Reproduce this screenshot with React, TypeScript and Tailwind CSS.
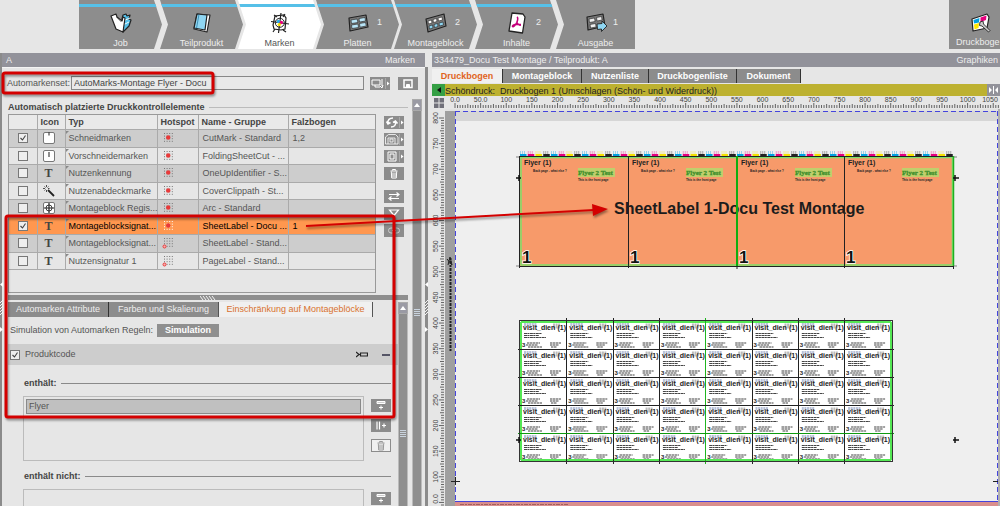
import { useState, type ReactNode } from 'react';
import clsx from 'clsx';

interface Step {
  label: string;
  icon: ReactNode;
  count?: number;
  bar?: boolean;
  className: string;
}

interface MarkRow {
  icon: 'cut' | 'precut' | 'text' | 'wand' | 'register';
  type: string;
  hotspot: 'center' | 'corner';
  name: string;
  sheet: string;
}

const ROWS: MarkRow[] = [
  { icon: 'cut', type: 'Schneidmarken', hotspot: 'center', name: 'CutMark - Standard', sheet: '1,2' },
  { icon: 'precut', type: 'Vorschneidemarken', hotspot: 'center', name: 'FoldingSheetCut - ...', sheet: '' },
  { icon: 'text', type: 'Nutzenkennung', hotspot: 'center', name: 'OneUpIdentifier - S...', sheet: '' },
  { icon: 'wand', type: 'Nutzenabdeckmarke', hotspot: 'center', name: 'CoverClippath - St...', sheet: '' },
  { icon: 'register', type: 'Montageblock Regis...', hotspot: 'center', name: 'Arc - Standard', sheet: '' },
  { icon: 'text', type: 'Montageblocksignat...', hotspot: 'center', name: 'SheetLabel - Docu ...', sheet: '1' },
  { icon: 'text', type: 'Montageblocksignat...', hotspot: 'corner', name: 'SheetLabel - Stand...', sheet: '' },
  { icon: 'text', type: 'Nutzensignatur 1', hotspot: 'corner', name: 'PageLabel - Stand...', sheet: '' },
];

const SELECTED_ROW = 5;

const CLIP_FIRST = '[clip-path:polygon(0_0,calc(100%-8px)_0,100%_50%,calc(100%-8px)_100%,0_100%)]';
const CLIP_MIDDLE = '[clip-path:polygon(0_0,calc(100%-8px)_0,100%_50%,calc(100%-8px)_100%,0_100%,8px_50%)]';
const CLIP_LAST = '[clip-path:polygon(0_0,100%_0,100%_100%,0_100%,8px_50%)]';

/* ---------- Icons: workflow bar ---------- */

function JobIcon() {
  return (
    <svg width="22" height="22" viewBox="0 0 22 22" strokeLinejoin="round" stroke="#222" strokeWidth="1.2">
      <path d="M12 7l1-4 3-1 1 2 3-1-1 4 2 1-2 6-6 6z" fill="#56c0e8" />
      <path d="M13 9l7-3M13 13l6-3" stroke="#fff" strokeWidth=".9" />
      <path d="M1 4l5-2 1 3 5 4 1-4 2 1-2 14-7-3z" fill="#fff" />
      <path d="M6 5l5 5" fill="none" stroke="#888" strokeWidth=".7" />
    </svg>
  );
}

function BookIcon() {
  return (
    <svg width="22" height="22" viewBox="0 0 22 22" strokeLinejoin="round" stroke="#222" strokeWidth="1.2">
      <path d="M6 2l13 1-3 17-13-3z" fill="#fff" />
      <path d="M6 2l10 1-2 15-11-2z" fill="#8fd6f2" />
      <path d="M8 2.300l-2.500 14" stroke="#2c7ea6" strokeWidth=".8" />
    </svg>
  );
}

function MarkIcon() {
  return (
    <svg width="20" height="22" viewBox="0 0 20 22" fill="none" stroke="#222">
      <path d="M5 4l9-1 2 3-1 11-4 1-7-1-1-4z" fill="#fff" strokeWidth="1.200" />
      <path d="M11 1L8.500 21M1 9.500l18 2.500" strokeWidth="1.200" />
      <path d="M4 3l3 2M13 18l3 2M15 2l-2 3M5 17l-2 3" strokeWidth="1.200" />
      <circle cx="9.800" cy="10.800" r="4.500" />
      <circle cx="8.500" cy="9.500" r="1.800" fill="#29abe2" stroke="none" />
      <circle cx="11.300" cy="10.500" r="1.800" fill="#e6007e" stroke="none" />
      <circle cx="9.300" cy="12.600" r="1.700" fill="#f5e000" stroke="none" />
    </svg>
  );
}

function PlateIcon() {
  return (
    <svg width="22" height="18" viewBox="0 0 22 18" strokeLinejoin="round" stroke="#222">
      <path d="M2 4l17-3 2 12-18 4z" fill="#777" strokeWidth="1.200" />
      <path d="M4 6l6-1 1 3.500-6.500 1zM12 4.500l6-1 .5 3.500-6 1zM4.500 11l6.500-1 .5 3.500-6.500 1zM12.500 9.500l6-1 .8 3.500-6.300 1.200z" fill="#b9e5f7" strokeWidth=".6" />
    </svg>
  );
}

function BlockIcon() {
  return (
    <svg width="22" height="20" viewBox="0 0 22 20" strokeLinejoin="round" stroke="#222" strokeWidth=".6">
      <path d="M1 6l18-5 2 12-18 6z" fill="#777" strokeWidth="1.200" />
      <path d="M3 8l3.500-1 .5 3-3.500 1zM8 6.500l3.500-1 .5 3-3.500 1zM13 5l4-1 .5 3-4 1z" fill="#fff" />
      <path d="M4 13l3.500-1 .5 3-3.500 1zM9 11.500l3.500-1 .5 3-3.500 1zM14 10l4-1 .5 3-4 1z" fill="#8fd6f2" />
    </svg>
  );
}

function PdfIcon() {
  return (
    <svg width="20" height="22" viewBox="0 0 20 22" fill="none" strokeLinejoin="round">
      <path d="M5 1l11 1 2 3-2.500 16L2 19z" fill="#fff" stroke="#222" strokeWidth="1.300" />
      <path d="M10 5c1.500 1 .8 3-.2 5.500C8.500 13.500 6 15.500 5.500 14.500c-.5-1.500 4-2.800 8.500-2M9.800 10.500c1 1.800 2.500 3 4 2.500" stroke="#c4007a" strokeWidth="1.600" />
    </svg>
  );
}

function OutputIcon() {
  return (
    <svg width="22" height="20" viewBox="0 0 22 20" strokeLinejoin="round" stroke="#222">
      <path d="M2 4l16-3 2 12-17 4z" fill="#777" strokeWidth="1.200" />
      <path d="M4 6l5.500-1 .6 3.500L4.500 9.500zM11.500 4.500l5-1 .6 3.500-5 1zM5 11.500l5.500-1 .6 3.500-5.500 1z" fill="#eee" strokeWidth=".6" />
      <path d="M12 11l5-.5V8l5 5-5.500 5.500V16l-4 .5z" fill="#8fd6f2" strokeWidth=".9" />
    </svg>
  );
}

function SheetToolIcon() {
  return (
    <svg width="22" height="20" viewBox="0 0 22 20" strokeLinejoin="round">
      <path d="M2 6l15-5 2 3-2 11-14 3z" fill="#fff" stroke="#222" strokeWidth="1.200" />
      <path d="M3.500 7l6-2-.5 4.500-5 1z" fill="#00a0e0" />
      <path d="M10.500 4.500l6-2-.5 4.500-5.500 2z" fill="#e6007e" />
      <path d="M4 11.500l5-1.500-.5 5-4 1.500z" fill="#ffe600" />
      <path d="M10 9l3-1 .5 3 6.500 6.500-1.500 1.500-6.500-6-2.500-.5z" fill="#ccc" stroke="#222" strokeWidth=".9" />
    </svg>
  );
}

/* ---------- Icons: panels ---------- */

function RowIcon({ kind }: { kind: MarkRow['icon'] }) {
  if (kind === 'text') {
    return <span className="font-['Liberation_Serif',serif] text-[12px] leading-none font-bold text-[#444]">T</span>;
  }
  if (kind === 'wand') {
    return (
      <svg width="12" height="12" viewBox="0 0 12 12" stroke="#222" fill="none">
        <path d="M5 5l6 6" strokeWidth="1.800" />
        <path d="M3.500 0v2M3.500 5v2M0 3.500h2M5 3.500h1.500M1.500 1.500l1 1M5.500 1.500l-1 1M1.500 5.500l1-1" strokeWidth=".8" />
      </svg>
    );
  }
  return (
    <svg width="12" height="12" viewBox="0 0 12 12" fill="none" stroke="#444">
      <rect x=".5" y=".5" width="11" height="11" rx="1.500" fill="#fff" stroke="#777" />
      {kind === 'cut' && <path d="M6 0v3.500" strokeWidth="1.200" />}
      {kind === 'precut' && <path d="M6 2v5" strokeWidth="1.200" />}
      {kind === 'register' && (
        <>
          <circle cx="6" cy="6" r="3" />
          <path d="M6 1v10M1 6h10" stroke="#222" strokeWidth="1.200" />
        </>
      )}
    </svg>
  );
}

function Hotspot({ kind, selected }: { kind: MarkRow['hotspot']; selected: boolean }) {
  const dots = [0, 1, 2, 3].flatMap((x) => [0, 1, 2, 3].map((y) => [x, y]));
  return (
    <svg width="12" height="12" viewBox="0 0 12 12">
      {dots.map(([x, y]) => (
        <rect key={`${x}-${y}`} x={2 + x * 2.6} y={1 + y * 2.6} width="1" height="1" fill={selected ? '#fff' : '#777'} />
      ))}
      {kind === 'center' ? (
        <circle cx="6.200" cy="5.500" r="2.200" fill="#e83a3a" />
      ) : (
        <circle cx="2.500" cy="9.500" r="1.500" fill="#f9b0b0" stroke="#e83a3a" />
      )}
    </svg>
  );
}

function ToolButton({ label, arrow, outlined, children }: { label: string; arrow?: boolean; outlined?: boolean; children: ReactNode }) {
  return (
    <button
      aria-label={label}
      className={clsx(
        'flex h-[13px] w-5 shrink-0 items-center justify-center',
        outlined ? 'border border-[#8c8c8c] bg-[#f0f0f0] text-[#999]' : 'bg-[#8c8c8c] text-white',
      )}
    >
      <svg width="20" height="13" viewBox="0 0 20 13" fill="none" stroke="currentColor" className="shrink-0">
        {arrow && <path d="M17 4.500l2.500 2-2.500 2z" fill="currentColor" stroke="none" />}
        {arrow && <path d="M15.500 1v11" stroke="#b5b5b5" strokeWidth=".7" />}
        {children}
      </svg>
    </button>
  );
}

function Trash() {
  return <path d="M6.500 4h7M8.500 3.500v-1h3v1M7.300 4.500l.4 6.500h4.600l.4-6.500M9 5.500v4.500M11 5.500v4.500" />;
}

function AddRow() {
  return <path d="M6 2.500h8v2H6zM10 6.500v4M8 8.500h4" fill="#ccc" />;
}

function ScrollTrack({ thumb }: { thumb: string }) {
  return (
    <div className="flex w-[10px] shrink-0 flex-col items-center border-x border-[#bbb] bg-[#8e8e8e]">
      <button aria-label="Nach oben" className="flex h-3 w-[10px] shrink-0 items-center justify-center border border-[#aaa] bg-[#9a9aa4]">
        <svg width="6" height="4" viewBox="0 0 6 4">
          <path d="M3 0l3 4H0z" fill="#fff" />
        </svg>
      </button>
      <svg width="6" height="8" viewBox="0 0 6 8" className={clsx('shrink-0', thumb)}>
        <path d="M0 .5h6M0 2.500h6M0 4.500h6M0 6.500h6" stroke="#c9d3de" />
      </svg>
    </div>
  );
}

function Divider({ className }: { className?: string }) {
  return (
    <svg width="3" height="50" viewBox="0 0 3 50" className={className}>
      <path d="M3 0v5L0 2.500z" fill="#fff" />
      <path d="M0 21l3-3M0 24l3-3M0 27l3-3M0 30l3-3M0 33l3-3" stroke="#fff" strokeWidth=".9" />
      <path d="M0 45l3 2.500L0 50z" fill="#fff" />
    </svg>
  );
}

/* ---------- Workflow bar ---------- */

const STEPS: Step[] = [
  { label: 'Job', icon: <JobIcon />, bar: true, className: clsx('w-[83px]', CLIP_FIRST) },
  { label: 'Teilprodukt', icon: <BookIcon />, bar: true, className: clsx('-ml-[2px] w-[83px]', CLIP_MIDDLE) },
  { label: 'Marken', icon: <MarkIcon />, bar: true, className: clsx('-ml-[5px] w-[83px]', CLIP_MIDDLE) },
  { label: 'Platten', icon: <PlateIcon />, count: 1, bar: true, className: clsx('-ml-[5px] w-[83px]', CLIP_MIDDLE) },
  { label: 'Montageblock', icon: <BlockIcon />, count: 2, bar: true, className: clsx('-ml-[5px] w-[83px]', CLIP_MIDDLE) },
  { label: 'Inhalte', icon: <PdfIcon />, count: 2, bar: true, className: clsx('-ml-[2px] w-[83px]', CLIP_MIDDLE) },
  { label: 'Ausgabe', icon: <OutputIcon />, count: 1, className: clsx('-ml-[2px] w-[79px]', CLIP_LAST) },
];

function WorkflowBar() {
  return (
    <header className="flex h-[49px] shrink-0 pl-[79px]">
      <nav className="flex">
        {STEPS.map((step) => (
          <button
            key={step.label}
            className={clsx(
              'relative flex shrink-0 flex-col items-center pt-[11px]',
              step.label === 'Marken' ? 'bg-white text-[#555]' : 'bg-[#8d8d8d] text-[#eee]',
              step.className,
            )}
          >
            {step.bar && <span className="absolute inset-x-0 top-1 h-[3px] bg-[#56c0e8]" />}
            <span className="flex h-[24px] items-center">{step.icon}</span>
            <span className="mt-[2px] leading-[12px]">{step.label}</span>
            {step.count && <span className="absolute top-[16px] right-[17px] leading-[12px]">{step.count}</span>}
          </button>
        ))}
      </nav>
      <button className="ml-auto flex w-[51px] shrink-0 flex-col items-start bg-[#8d8d8d] pt-[11px] pl-[7px] text-[#eee]">
        <span className="flex h-[24px] items-center pl-[14px]">
          <SheetToolIcon />
        </span>
        <span className="mt-px leading-[12px] whitespace-nowrap">Druckboge</span>
      </button>
    </header>
  );
}

/* ---------- Left side: marks ---------- */

function Check({ label, checked, onChange }: { label: string; checked: boolean; onChange: () => void }) {
  return (
    <span className="relative block size-[10px]">
      <input
        type="checkbox"
        aria-label={label}
        checked={checked}
        onChange={onChange}
        className="block size-[10px] appearance-none border border-[#777] bg-[#eee]"
      />
      {checked && (
        <svg width="10" height="10" viewBox="0 0 10 10" className="pointer-events-none absolute inset-0">
          <path d="M2.500 5l2 2 3-4.500" fill="none" stroke="#444" strokeWidth="1.100" />
        </svg>
      )}
    </span>
  );
}

function MarksTable() {
  const [checked, setChecked] = useState<number[]>([0, 5]);

  const toggle = (i: number) => {
    setChecked((prev) => (prev.includes(i) ? prev.filter((n) => n !== i) : [...prev, i]));
  };

  return (
    <div className="h-[179px] min-w-0 flex-1 border border-[#999]">
      <table className="w-full table-fixed border-collapse text-left text-[#555]">
        <colgroup>
          <col className="w-[28px]" />
          <col className="w-[28px]" />
          <col />
          <col className="w-[41px]" />
          <col className="w-[90px]" />
          <col className="w-[87px]" />
        </colgroup>
        <thead>
          <tr className="h-[14px] bg-[#e9e9e9] leading-[12px] text-[#444] [&>th]:border-r [&>th]:border-b [&>th]:border-[#aaa] [&>th]:p-0 [&>th]:pl-[3px] [&>th:last-child]:border-r-0">
            <th />
            <th>Icon</th>
            <th>Typ</th>
            <th>Hotspot</th>
            <th>Name - Gruppe</th>
            <th>Falzbogen</th>
          </tr>
        </thead>
        <tbody>
          {ROWS.map((row, i) => {
            const selected = i === SELECTED_ROW;
            return (
              <tr
                key={i}
                className={clsx(
                  'leading-[12px] odd:h-[18px] even:h-[17px] [&>td]:border-r [&>td]:border-b [&>td]:border-[#aaa] [&>td]:p-0 [&>td]:whitespace-nowrap [&>td:last-child]:border-r-0',
                  selected ? 'bg-[#ff974f] text-black' : 'odd:bg-[#cdcdcd] even:bg-[#e6e6e6]',
                )}
              >
                <td>
                  <div className="flex justify-center">
                    <Check label={row.type} checked={checked.includes(i)} onChange={() => toggle(i)} />
                  </div>
                </td>
                <td>
                  <div className="flex h-3 items-center pl-[5px]">
                    <span className="flex w-3 justify-center">
                      <RowIcon kind={row.icon} />
                    </span>
                  </div>
                </td>
                <td>
                  <div className="relative pl-[3px]">
                    <svg width="3" height="3" className="absolute -top-px left-0">
                      <path d="M0 0h3L0 3z" fill="#888" />
                    </svg>
                    {row.type}
                  </div>
                </td>
                <td>
                  <div className="pl-1">
                    <Hotspot kind={row.hotspot} selected={selected} />
                  </div>
                </td>
                <td>
                  <div className="pl-1">{row.name}</div>
                </td>
                <td>
                  <div className="pl-1">{row.sheet}</div>
                </td>
              </tr>
            );
          })}
        </tbody>
      </table>
    </div>
  );
}

function MarksTools() {
  return (
    <div className="mt-[2px] flex flex-col gap-[4px]">
      <ToolButton label="Aktualisieren" arrow>
        <path d="M9 2C5.500 2 3.500 4 4 7M2.500 5.500L4 8l2.500-1.500M7 11c3.500 0 5-2 4.500-5M13.500 7.500L11.500 5 9 6.500" strokeWidth="1.500" />
      </ToolButton>
      <ToolButton label="Ansicht" arrow>
        <path d="M1.500 11V4l3-2.500h7L14 4v7zM4 11V5h7v6M6 9V6h3v3z" strokeWidth=".8" />
      </ToolButton>
      <ToolButton label="Rahmen" arrow>
        <path d="M4 2h8v9H4zM6 4h4v5H6z" />
      </ToolButton>
      <ToolButton label="Löschen">
        <Trash />
      </ToolButton>
      <div className="mt-[6px] flex flex-col gap-[4px]">
        <ToolButton label="Tauschen">
          <path d="M5 4.500h9M12.500 2.500l2.500 2-2.500 2M15 8.500H6M7.500 6.500l-2.500 2 2.500 2" strokeWidth="1.200" />
        </ToolButton>
        <ToolButton label="Filtern">
          <path d="M5.500 3h9L10 8.500z" strokeWidth="1.200" />
        </ToolButton>
        <ToolButton label="Verknüpfen">
          <path d="M8.500 4h-1.500a2.500 2.500 0 000 5h1.500M11.500 4H13a2.500 2.500 0 010 5h-1.500M8 6.500h4" stroke="#ccc" />
        </ToolButton>
      </div>
    </div>
  );
}

function GroupTitle({ children }: { children: ReactNode }) {
  return (
    <h3 className="flex items-center gap-1 leading-[12px] font-bold text-[#444]">
      {children}
      <span className="h-px flex-1 bg-[#8a8a8a]" />
    </h3>
  );
}

function RulePanel() {
  const [active, setActive] = useState(true);

  return (
    <div className="min-w-0 flex-1">
      <div className="flex h-[15px] text-[#eee]">
        <button className="w-[100px] shrink-0 bg-[#8c8c8c]">Automarken Attribute</button>
        <button className="w-[110px] shrink-0 border-l border-[#333] bg-[#8c8c8c]">Farben und Skalierung</button>
        <button className="w-[155px] shrink-0 border-r border-l border-[#555] bg-[#f0f0f0] text-[#d9702e]">
          Einschränkung auf Montageblöcke
        </button>
      </div>
      <div className="mt-[7px] flex items-center gap-1 pl-[2px]">
        <span>Simulation von Automarken Regeln:</span>
        <button className="h-[13px] w-[62px] bg-[#8f8f8f] leading-[13px] font-bold text-white">Simulation</button>
      </div>
      <div className="mt-[7px] flex h-[21px] items-center bg-[#cdcdcd] pr-2 pl-[2px]">
        <Check label="Produktcode" checked={active} onChange={() => setActive(!active)} />
        <span className="ml-[5px]">Produktcode</span>
        <svg width="12" height="7" viewBox="0 0 12 7" className="ml-auto" fill="none" stroke="#222">
          <path d="M0 1l3 2.500L0 6M3 3.500h2M4.500 2h7v3h-7z" strokeWidth="1.200" />
        </svg>
        <button aria-label="Einklappen" className="ml-[14px] h-[2px] w-2 bg-[#555566]" />
      </div>
      <div className="pt-[12px] pr-[7px] pl-4">
        <GroupTitle>enthält:</GroupTitle>
        <div className="mt-[7px] flex items-start gap-[7px]">
          <ul className="-ml-px h-[65px] flex-1 border border-[#bbb] p-[2px]">
            <li className="h-[15px] border border-[#8a8a8a] bg-[#c0c0c0] pl-[2px] leading-[13px]">Flyer</li>
          </ul>
          <div className="mt-[3px] flex flex-col gap-[7px]">
            <ToolButton label="Zeile hinzufügen">
              <AddRow />
            </ToolButton>
            <ToolButton label="Spalte hinzufügen">
              <path d="M6 2.500v8M8.500 2.500v8M11 6.500h4M13 4.500v4" strokeWidth="1.200" />
            </ToolButton>
            <ToolButton label="Zeile löschen" outlined>
              <Trash />
            </ToolButton>
          </div>
        </div>
        <div className="pt-[9px]">
          <GroupTitle>enthält nicht:</GroupTitle>
        </div>
        <div className="mt-[7px] flex items-start gap-[7px]">
          <ul className="-ml-px h-[65px] flex-1 border border-[#bbb] p-[2px]" />
          <div className="mt-[3px]">
            <ToolButton label="Zeile hinzufügen">
              <AddRow />
            </ToolButton>
          </div>
        </div>
      </div>
    </div>
  );
}

function MarksPane() {
  return (
    <section className="relative flex w-[43%] shrink-0 flex-col border-l-2 border-[#8b8b8b]">
      <Divider className="absolute top-[229px] -left-[2px]" />
      <div className="mr-[5px] flex h-[14px] shrink-0 items-center justify-between bg-[#92929a] pr-[10px] pl-1 text-[#eee]">
        <h2>A</h2>
        <span>Marken</span>
      </div>
      <div className="flex min-h-0 flex-1">
        <div className="flex min-w-0 flex-1 flex-col overflow-hidden border-t border-[#f4f4f4]">
          <div className="mt-2 flex items-center pl-[5px]">
            <label htmlFor="markset" className="w-[64px] shrink-0">
              Automarkenset:
            </label>
            <input
              id="markset"
              defaultValue="AutoMarks-Montage Flyer - Docu"
              className="h-[14px] min-w-0 flex-1 border border-[#888] bg-[#e9e9e9] px-[2px] text-[#444]"
            />
            <div className="mr-[7px] ml-[6px] flex gap-2">
              <ToolButton label="Set laden" arrow>
                <path d="M2 3h8v5H2zM5 8v2h5M12 2v7M10 9l2 2 1-3" />
              </ToolButton>
              <ToolButton label="Set speichern">
                <path d="M6 3h8v7.500H6z" strokeWidth="1.500" />
                <path d="M8.500 10V7.500h3V10" fill="currentColor" />
              </ToolButton>
            </div>
          </div>
          <div className="mt-[9px] flex min-h-0 flex-1">
            <div className="flex min-w-0 flex-1 flex-col overflow-hidden pr-1 pl-[6px]">
              <div className="mt-px flex items-center gap-1 leading-[14px] font-bold text-[#444]">
                Automatisch platzierte Druckkontrollelemente
                <span className="h-px flex-1 bg-[#bbb]" />
              </div>
              <div className="flex gap-2 pr-1">
                <MarksTable />
                <MarksTools />
              </div>
              <div className="mt-[2px] flex h-[5px] shrink-0 items-center justify-center bg-[#8e8e8e]">
                <svg width="16" height="4" viewBox="0 0 16 4">
                  <path d="M0 0l3 4M3 0l3 4M6 0l3 4M9 0l3 4M12 0l3 4" stroke="#fff" strokeWidth=".9" />
                </svg>
              </div>
              <div className="mt-[2px] flex min-h-0 flex-1 overflow-hidden">
                <RulePanel />
                <ScrollTrack thumb="mt-[116px]" />
              </div>
            </div>
            <ScrollTrack thumb="mt-[198px]" />
            <div className="w-[3px]" />
          </div>
        </div>
        <div className="mr-[2px] flex w-[3px] shrink-0 flex-col bg-[#8b8b8b] pt-[215px]">
          <Divider />
        </div>
      </div>
    </section>
  );
}

/* ---------- Right side: sheet preview ---------- */

const UNIT = 25.63; // pixels for 50 mm

function HorizontalRuler() {
  return (
    <svg width="100%" height="13" className="block min-w-0 flex-1 bg-[#e6e6e6]">
      {Array.from({ length: 220 }, (_, i) => {
        const x = 10 + (i * UNIT) / 10;
        return <path key={i} d={`M${x} ${i % 10 === 0 ? 7 : i % 5 === 0 ? 8 : 9}V12`} stroke="#555" strokeWidth=".9" />;
      })}
      {Array.from({ length: 22 }, (_, i) => (
        <text key={i} x={i === 21 ? 545 : 10 + i * UNIT} y="6" textAnchor="middle" fontSize="7" fill="#444">
          {i === 0 ? '0.0' : i === 1 ? '50.0' : i * 50}
        </text>
      ))}
    </svg>
  );
}

function VerticalRuler() {
  return (
    <svg width="13" height="100%" className="block shrink-0 bg-[#e6e6e6]">
      {Array.from({ length: 160 }, (_, i) => {
        const y = 9 + (i * UNIT) / 10;
        return <path key={i} d={`M${i % 10 === 0 ? 7 : i % 5 === 0 ? 8 : 9} ${y}H12`} stroke="#555" strokeWidth=".9" />;
      })}
      {Array.from({ length: 16 }, (_, i) => (
        <text key={i} transform={`translate(6 ${i === 15 ? 390 : 9 + i * UNIT}) rotate(-90)`} textAnchor="middle" fontSize="7" fill="#444">
          {i === 15 ? '0.0' : 800 - i * 50}
        </text>
      ))}
    </svg>
  );
}

const FLYER_X = [75, 183, 292, 399];
const INKS = ['#00a0e0', '#e6007e', '#f5e000', '#222'];

function FlyerBlock() {
  return (
    <g>
      {Array.from({ length: 56 }, (_, i) => (
        <g key={i} fill={INKS[i % 4]}>
          <rect x={75 + i * 7.75} y="45" width="6.500" height="2.500" />
          <path d={`M${75 + i * 7.75} 43.500h6`} stroke={INKS[i % 4]} strokeWidth="3" strokeDasharray="1 1" opacity=".35" />
        </g>
      ))}
      <rect x="75" y="47" width="433" height="110" fill="#f79a6a" />
      <path d="M75.500 48.500H508M75.500 156H508M76 48V156M507.500 48V156" stroke="#7ce06a" strokeWidth="1.500" />
      <path d="M74 47.500h434M74 157.500h435M74.500 47v112" stroke="#222" />
      <path d="M508.500 47v110" stroke="#1fae1f" strokeWidth="1.500" />
      <text x="169" y="105" fontSize="16" fontWeight="bold" fill="#1c1c1c">
        SheetLabel 1-Docu Test Montage
      </text>
      <path d="M183.500 47v112M399.500 47v112" stroke="#222" />
      <path d="M292 47v110" stroke="#0fae0f" strokeWidth="2" />
      <path d="M292 157v3M508.500 157v3" stroke="#222" />
      {FLYER_X.map((x) => (
        <g key={x}>
          <text x={x + 4} y="56" fontSize="7" fontWeight="bold" fill="#222">
            Flyer (1)
          </text>
          <text x={x + 13} y="63" fontSize="3" fontWeight="bold" fill="#222">
            Back page - what else ?
          </text>
          <rect x={x + 58} y="59" width="37" height="9" fill="#c0cf6c" />
          <text x={x + 58} y="66" fontSize="7" fontWeight="bold" fill="#3f8f2c" stroke="#3f8f2c" strokeWidth=".3" fontFamily="'Liberation Serif', serif">
            Flyer 2 Test
          </text>
          <text x={x + 58} y="72" fontSize="3" fontWeight="bold" fill="#222">
            This is the front page
          </text>
          <text x={x + 2} y="154" fontSize="17" fontWeight="bold" fill="#111" stroke="#fff" strokeWidth="1.500" paintOrder="stroke">
            1
          </text>
        </g>
      ))}
      <path d="M71 48h3M71 157h3M509 48h3M509 157h3" stroke="#555" strokeWidth=".7" />
    </g>
  );
}

function CardBlock() {
  const cols = Array.from({ length: 8 }, (_, i) => 76 + i * 46.3);
  const rows = Array.from({ length: 5 }, (_, i) => 212 + i * 28);
  return (
    <g>
      <rect x="76" y="212" width="370" height="140" fill="#fff" />
      {rows.map((y) =>
        cols.map((x) => (
          <g key={`${x}-${y}`}>
            <path d={`M${x + 3} ${y + 3.5}h13`} stroke="#b9c2d8" strokeWidth="3" strokeDasharray="2 .6" />
            <path d={`M${x + 32} ${y + 5}h7`} stroke="#bbb" strokeWidth="5" strokeDasharray="2 .6" />
            <text x={x + 2} y={y + 9} fontSize="7" fontWeight="bold" fill="#222">
              visit_dien
            </text>
            <text x={x + 45} y={y + 9} fontSize="7" fontWeight="bold" fill="#222" textAnchor="end">
              (1)
            </text>
            <path d={`M${x + 3} ${y + 12.5}h18M${x + 3} ${y + 14.5}h15M${x + 3} ${y + 16.5}h22`} stroke="#444" strokeWidth="1.100" strokeDasharray="3 .4 2 .5" />
            <text x={x + 1} y={y + 26} fontSize="6" fontWeight="bold" fill="#222">
              3
            </text>
            <path
              d={`M${x + 6} ${y + 22}h13M${x + 5} ${y + 24}h12M${x + 7} ${y + 26}h14M${x + 29} ${y + 22}h11M${x + 29} ${y + 24}h9M${x + 30} ${y + 26}h6`}
              stroke="#444"
              strokeWidth="1.200"
              strokeDasharray="2.500 .5"
            />
          </g>
        )),
      )}
      <path d="M76 213h370M76 351h370M76 213v138M446 213v138" stroke="#55e855" strokeWidth="2" />
      {cols.slice(1).map((x, i) => (
        <path key={x} d={`M${Math.round(x) - 0.5} 209v146`} stroke={i === 3 ? '#1fb51f' : '#222'} />
      ))}
      {rows.slice(1).map((y, i) => (
        <path key={y} d={`M73 ${y + 0.5}h376`} stroke={i === 3 ? '#0f9a0f' : '#222'} />
      ))}
      <path d="M74 211.500h374M74 352.500h374M74.500 211v142M447.500 211v142" stroke="#333" />
    </g>
  );
}

function SheetCanvas() {
  return (
    <div className="relative min-w-0 flex-1 overflow-hidden border-r-2 border-[#b0b0b0] bg-[#efefef]">
      <svg width="100%" height="100%" className="absolute inset-0">
        <rect width="100%" height="12" fill="#d6d6d6" />
        <rect width="10" height="100%" fill="#9f9f9f" />
        <rect width="100%" height="2" fill="#e2e2e2" />
        <path d="M5.500 149v93" stroke="#222" strokeWidth="2" strokeDasharray="2 1 3 1" />
        <path d="M3 156l2-8 2 8M2 150l5 6" stroke="#222" fill="none" />
        <path d="M10 2.500h543" stroke="#4444dd" strokeDasharray="5 3" />
        <path d="M10.500 2v391" stroke="#4444dd" strokeDasharray="5 3" />
        <path d="M552.500 2v391" stroke="#4444dd" strokeDasharray="5 3" />
        <FlyerBlock />
        <CardBlock />
        <path d="M71 69h5M74 66v6M508 69h6M510 66v6M71 331h5M74 328v6M508 331h6M510 328v6" stroke="#111" strokeWidth="1.500" />
        <path d="M6 372.500h9M10.500 368v8M548 372.500h9" stroke="#222" />
        <rect x="10" y="393" width="543" height="4" fill="#d98f8d" />
        <path d="M10 392.500h543" stroke="#4444dd" />
        <path d="M15 395.500h108" stroke="#a35f5f" strokeDasharray="4 1 2 1" />
      </svg>
    </div>
  );
}

const TABS = [
  { label: 'Druckbogen', width: 'w-[71px]' },
  { label: 'Montageblock', width: 'w-[79px]' },
  { label: 'Nutzenliste', width: 'w-[67px]' },
  { label: 'Druckbogenliste', width: 'w-[88px]' },
  { label: 'Dokument', width: 'w-[64px]' },
];

function SheetPane() {
  const [tab, setTab] = useState('Druckbogen');

  return (
    <section className="ml-[2px] flex min-w-0 flex-1 flex-col">
      <div className="flex h-[14px] shrink-0 items-center justify-between bg-[#92929a] pr-[2px] pl-[2px] text-[#eee]">
        <h2>334479_Docu Test Montage / Teilprodukt: A</h2>
        <span>Graphiken</span>
      </div>
      <div className="mt-[2px] flex h-[14px] shrink-0 font-bold">
        {TABS.map(({ label, width }) => (
          <button
            key={label}
            onClick={() => setTab(label)}
            className={clsx('border-r border-[#333]', width, tab === label ? 'bg-[#f0f0f0] text-[#e0641c]' : 'bg-[#8c8c8c] text-white')}
          >
            {label}
          </button>
        ))}
      </div>
      <div className="mt-px flex h-3 shrink-0 bg-[#bdb130]">
        <button aria-label="Vorheriger Bogen" className="flex w-[13px] items-center justify-center bg-[#35a045]">
          <svg width="4" height="6" viewBox="0 0 4 6">
            <path d="M4 0v6L0 3z" fill="#111" />
          </svg>
        </button>
        <span className="leading-[14px] whitespace-pre text-[#222]">Schöndruck:  Druckbogen 1 (Umschlagen (Schön- und Widerdruck))</span>
        <button aria-label="Teilen" className="ml-auto flex w-[13px] items-center justify-center bg-[#92929a]">
          <svg width="9" height="8" viewBox="0 0 9 8" fill="#fff">
            <path d="M0 1v6l3-3zM9 1v6L6 4zM4 0h1v8H4z" />
          </svg>
        </button>
      </div>
      <div className="flex shrink-0">
        <div className="flex w-[13px] items-center justify-center">
          <svg width="10" height="10" viewBox="0 0 10 10">
            <path d="M0 0h4.500v4.500H0zM5.500 0H10v4.500H5.500zM0 5.500h4.500V10H0zM5.500 5.500H10V10H5.500z" fill="#70707a" />
          </svg>
        </div>
        <HorizontalRuler />
      </div>
      <div className="flex min-h-0 flex-1">
        <VerticalRuler />
        <SheetCanvas />
      </div>
    </section>
  );
}

/* ---------- Red callouts ---------- */

function Callouts() {
  return (
    <div className="pointer-events-none absolute inset-0">
      <svg width="100%" height="100%" fill="none" className="drop-shadow-[1px_2px_1px_rgba(0,0,0,0.4)]">
        <rect x="3" y="73" width="210" height="20" rx="2" stroke="#d40000" strokeWidth="3" />
        <rect x="6" y="216" width="388" height="201" rx="2" stroke="#d40000" strokeWidth="3" />
        <path d="M306 226l288-16" stroke="#d40000" strokeWidth="2" />
        <path d="M592 204l16 5-15 7z" fill="#d40000" />
      </svg>
    </div>
  );
}

export default function App() {
  return (
    <div className="relative flex h-screen flex-col overflow-hidden bg-[#e6e6e6] font-['Liberation_Sans',Arial,sans-serif] text-[9px] leading-[13px] text-[#555]">
      <WorkflowBar />
      <main className="mt-1 flex min-h-0 flex-1">
        <MarksPane />
        <SheetPane />
      </main>
      <Callouts />
    </div>
  );
}
